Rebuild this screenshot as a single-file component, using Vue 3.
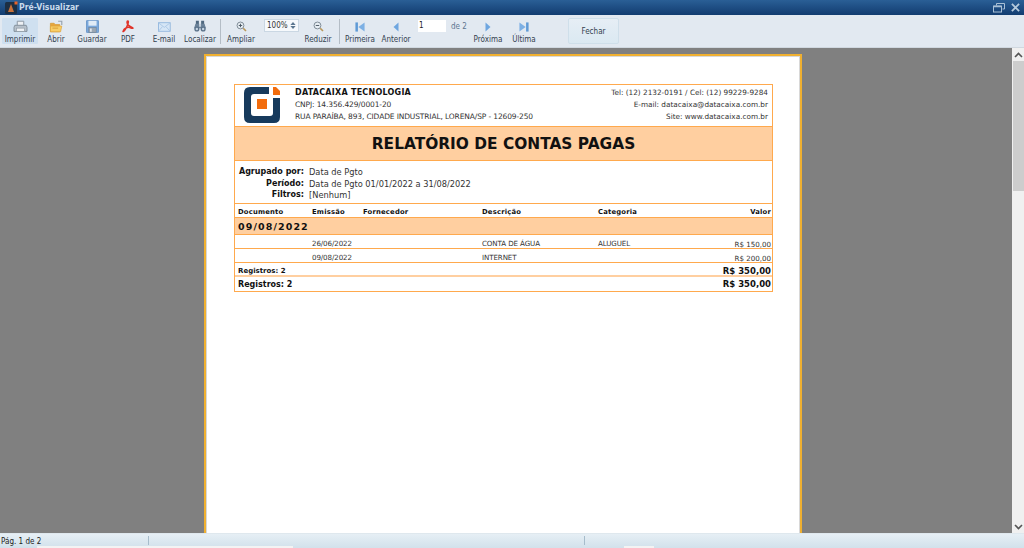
<script setup>
const rows = [
  { date: '26/06/2022', desc: 'CONTA DE ÁGUA', cat: 'ALUGUEL', val: 'R$ 150,00' },
  { date: '09/08/2022', desc: 'INTERNET', cat: '', val: 'R$ 200,00' },
]
</script>

<template>
  <div class="app">
    <header class="titlebar">
      <svg class="appicon" width="14" height="14" viewBox="0 0 14 14">
        <rect x="1" y="1" width="12" height="12" rx="1.5" fill="#1c2f44" />
        <path d="M7 3 L10 11 H4 Z" fill="#c9713a" />
        <rect x="10.5" y="0.5" width="3" height="3" fill="#e8642a" />
      </svg>
      <span class="title">Pré-Visualizar</span>
      <span class="winbtns">
        <svg width="12" height="10" viewBox="0 0 12 10">
          <path d="M3.5 2.5 V0.5 H11.5 V6 H9.5" fill="none" stroke="#a9c0d6" />
          <rect x="0.5" y="3" width="8" height="6" fill="none" stroke="#a9c0d6" />
          <path d="M1 3.5 H8" stroke="#a9c0d6" stroke-width="1.5" />
        </svg>
        <svg width="9" height="9" viewBox="0 0 10 10">
          <path d="M1 1 L9 9 M9 1 L1 9" stroke="#b5cadc" stroke-width="2" />
        </svg>
      </span>
    </header>

    <nav class="toolbar">
      <button class="tool active">
        <svg width="15" height="13" viewBox="0 0 18 16">
          <path d="M5 7 V1.5 H13 V7" fill="#eef1f4" stroke="#8c97a3" stroke-width="1.2" />
          <path d="M2 6.5 H16 L17 9 V14 H1 V9 Z" fill="#b7c1cb" stroke="#7f8b97" stroke-width="1.1" />
          <rect x="4" y="10" width="10" height="4" fill="#eef1f4" stroke="#8c97a3" stroke-width=".8" />
        </svg>
        <span>Imprimir</span>
      </button>
      <button class="tool">
        <svg width="15" height="13" viewBox="0 0 18 16">
          <path d="M1.5 4 H6 L7.5 5.5 H13 V14.5 H1.5 Z" fill="#e7a63d" stroke="#d2962f" stroke-width=".8" />
          <path d="M1.5 7.5 H15.5 L14 14.5 H1.5 Z" fill="#f8cd66" stroke="#dca23a" stroke-width=".8" />
          <path d="M11 1.5 H15.5 V6" fill="none" stroke="#97a3af" stroke-width="1.4" />
          <path d="M4 10 H11" stroke="#d2962f" />
        </svg>
        <span>Abrir</span>
      </button>
      <button class="tool">
        <svg width="13" height="13" viewBox="0 0 16 16">
          <rect x="0.5" y="0.5" width="15" height="15" rx="1" fill="#7aa8dc" stroke="#5f8fc4" />
          <rect x="3" y="1" width="10" height="6" fill="#e0ebf6" />
          <rect x="3.5" y="9.5" width="9" height="6" fill="#9aa6b2" stroke="#6c7b8a" stroke-width=".6" />
          <rect x="5" y="10.5" width="2" height="4" fill="#e4eaf0" />
        </svg>
        <span>Guardar</span>
      </button>
      <button class="tool">
        <svg width="12" height="13" viewBox="0 0 16 16">
          <path d="M7 1 C6 4 8 7 14 9.5 C15.5 10.2 14 11 12 10 C8 8 3 9.5 1.5 14 C0.8 15.5 3 15 5 11 C6.5 8 8.5 3.5 8.5 1.5 C8.5 0.6 7.3 0.5 7 1 Z" fill="none" stroke="#e0342a" stroke-width="2" />
        </svg>
        <span>PDF</span>
      </button>
      <button class="tool">
        <svg class="low" width="13" height="10" viewBox="0 0 18 14">
          <rect x="0.5" y="1" width="16.5" height="12" fill="#d6e6f6" stroke="#8fb4dc" stroke-width="1.2" />
          <path d="M1 1.5 L8.7 7.5 L16.5 1.5 M1 12.5 L6 6.5 M16.5 12.5 L11 6.5" fill="none" stroke="#a7c5e4" stroke-width="1.2" />
        </svg>
        <span>E-mail</span>
      </button>
      <button class="tool">
        <svg width="12" height="12" viewBox="0 0 16 16">
          <rect x="2.5" y="1" width="4" height="6" fill="#4f6880" />
          <rect x="9.5" y="1" width="4" height="6" fill="#4f6880" />
          <path d="M2 5 H7 V9 H9 V5 H14 L16 11 H0 Z" fill="#6b8299" />
          <circle cx="3.8" cy="12" r="3.4" fill="#5a7189" />
          <circle cx="12.2" cy="12" r="3.4" fill="#5a7189" />
          <circle cx="3.8" cy="12" r="1.6" fill="#c3d3e2" />
          <circle cx="12.2" cy="12" r="1.6" fill="#c3d3e2" />
        </svg>
        <span>Localizar</span>
      </button>
      <i class="sep"></i>
      <button class="tool">
        <svg class="nudge" width="11" height="11" viewBox="0 0 16 16">
          <circle cx="6.5" cy="6.5" r="5" fill="#e6edf3" stroke="#7c8894" stroke-width="1.4" />
          <path d="M4 6.5 H9 M6.5 4 V9" stroke="#4a5763" stroke-width="1.4" />
          <path d="M10.5 10.5 L14.5 14.5" stroke="#b9975a" stroke-width="2.4" />
        </svg>
        <span>Ampliar</span>
      </button>
      <div class="zoom">
        <span class="zoomval">100%</span>
        <span class="spin">
          <svg width="6" height="3" viewBox="0 0 7 4"><path d="M3.5 0 L7 4 H0 Z" fill="#5b7690" /></svg>
          <svg width="6" height="3" viewBox="0 0 7 4"><path d="M3.5 4 L7 0 H0 Z" fill="#5b7690" /></svg>
        </span>
      </div>
      <button class="tool">
        <svg class="nudge" width="11" height="11" viewBox="0 0 16 16">
          <circle cx="6.5" cy="6.5" r="5" fill="#e6edf3" stroke="#7c8894" stroke-width="1.4" />
          <path d="M4 6.5 H9" stroke="#4a5763" stroke-width="1.4" />
          <path d="M10.5 10.5 L14.5 14.5" stroke="#b9975a" stroke-width="2.4" />
        </svg>
        <span>Reduzir</span>
      </button>
      <i class="sep wide"></i>
      <button class="tool">
        <svg class="nav" width="10" height="10" viewBox="0 0 12 12">
          <rect x="0.5" y="0.5" width="3" height="11" fill="#5f9ad6" />
          <path d="M11.5 0.5 V11.5 L4 6 Z" fill="#7db0e4" />
        </svg>
        <span>Primeira</span>
      </button>
      <button class="tool">
        <svg class="nav" width="10" height="10" viewBox="0 0 12 12"><path d="M9 0.5 V11.5 L3 6 Z" fill="#6ea6e0" /></svg>
        <span>Anterior</span>
      </button>
      <div class="pager">
        <span class="pageinput">1</span>
        <span class="of">de 2</span>
      </div>
      <button class="tool">
        <svg class="nav" width="10" height="10" viewBox="0 0 12 12"><path d="M3 0.5 V11.5 L9 6 Z" fill="#6ea6e0" /></svg>
        <span>Próxima</span>
      </button>
      <button class="tool">
        <svg class="nav" width="10" height="10" viewBox="0 0 12 12">
          <rect x="8.5" y="0.5" width="3" height="11" fill="#5f9ad6" />
          <path d="M0.5 0.5 V11.5 L8 6 Z" fill="#7db0e4" />
        </svg>
        <span>Última</span>
      </button>
      <button class="close">Fechar</button>
    </nav>

    <main class="body">
      <section class="canvas">
        <article class="page">
          <div class="report">
            <div class="rhead">
              <svg class="logo" width="36" height="36" viewBox="0 0 36 36">
                <path d="M25 0 H6 Q0 0 0 6 V30 Q0 36 6 36 H30 Q36 36 36 30 V11 H29 V26 Q29 29 26 29 H10 Q7 29 7 26 V10 Q7 7 10 7 H25 Z" fill="#173a5c" />
                <rect x="13" y="12" width="10" height="10" fill="#f26c0d" />
                <path d="M29 0 H32 L36 4 V8 H29 Z" fill="#f26c0d" />
              </svg>
              <div class="company">
                <b>DATACAIXA TECNOLOGIA</b>
                <span>CNPJ: 14.356.429/0001-20</span>
                <span>RUA PARAÍBA, 893, CIDADE INDUSTRIAL, LORENA/SP - 12609-250</span>
              </div>
              <div class="contact">
                <span>Tel: (12) 2132-0191 / Cel: (12) 99229-9284</span>
                <span>E-mail: datacaixa@datacaixa.com.br</span>
                <span>Site: www.datacaixa.com.br</span>
              </div>
            </div>
            <h1 class="rtitle">RELATÓRIO DE CONTAS PAGAS</h1>
            <dl class="info">
              <dt>Agrupado por:</dt><dd>Data de Pgto</dd>
              <dt>Período:</dt><dd>Data de Pgto 01/01/2022 a 31/08/2022</dd>
              <dt>Filtros:</dt><dd>[Nenhum]</dd>
            </dl>
            <div class="grid cols">
              <span>Documento</span><span>Emissão</span><span>Fornecedor</span><span>Descrição</span><span>Categoria</span><span class="right">Valor</span>
            </div>
            <div class="group">09/08/2022</div>
            <div v-for="r in rows" :key="r.date" class="grid row">
              <span></span><span>{{ r.date }}</span><span></span><span>{{ r.desc }}</span><span>{{ r.cat }}</span><span class="right val">{{ r.val }}</span>
            </div>
            <div class="sum sub"><span>Registros: 2</span><b>R$ 350,00</b></div>
            <div class="sum total"><span>Registros: 2</span><b>R$ 350,00</b></div>
          </div>
        </article>
      </section>
      <aside class="scroll">
        <span class="arrow">
          <svg width="9" height="6" viewBox="0 0 9 6"><path d="M1 5 L4.5 1.5 L8 5" fill="none" stroke="#555" stroke-width="1.6" /></svg>
        </span>
        <span class="thumb"></span>
        <span class="track"></span>
        <span class="arrow">
          <svg width="9" height="6" viewBox="0 0 9 6"><path d="M1 1 L4.5 4.5 L8 1" fill="none" stroke="#555" stroke-width="1.6" /></svg>
        </span>
      </aside>
    </main>

    <footer class="status">
      <span class="stext">Pág. 1 de 2</span>
      <i class="sbar first"></i>
      <i class="sbar second"></i>
      <i class="strip a"></i>
      <i class="strip b"></i>
    </footer>
  </div>
</template>

<style>
html, body { margin: 0; padding: 0; overflow: hidden; background: #808080; }
</style>

<style scoped>
.app {
  width: 1024px;
  height: 548px;
  display: flex;
  flex-direction: column;
  overflow: hidden;
  font-family: "DejaVu Sans Condensed", "DejaVu Sans", sans-serif;
  color: #2c3a47;
}
.titlebar {
  height: 15px;
  flex: none;
  display: flex;
  align-items: center;
  padding: 0 3px 0 4px;
  background: linear-gradient(#2a5f96, #123c70);
  box-sizing: border-box;
}
.appicon { flex: none; }
.title {
  margin-left: 1px;
  font: 700 8.6px/15px "DejaVu Sans Condensed", "DejaVu Sans", sans-serif;
  color: #c9dbec;
}
.winbtns {
  margin-left: auto;
  display: flex;
  align-items: center;
  gap: 6px;
  padding-right: 1px;
}
.toolbar {
  height: 33px;
  flex: none;
  box-sizing: border-box;
  padding: 3px 0 0 2px;
  display: flex;
  align-items: flex-start;
  background: #e2e9f1;
  border-bottom: 1px solid #d0d8e0;
}
.tool {
  width: 36px;
  height: 26px;
  flex: none;
  margin: 0;
  padding: 2px 0 0;
  border: 0;
  background: none;
  display: flex;
  flex-direction: column;
  align-items: center;
  justify-content: flex-start;
  position: relative;
  font: inherit;
  color: inherit;
}
.tool svg { flex: none; }
.tool svg.low { margin-top: 2px; }
.tool svg.nudge { margin-top: 1px; }
.tool svg.nav { margin-top: 2px; }
.tool span {
  position: absolute;
  top: 16px;
  left: -4px;
  right: -4px;
  text-align: center;
  font: 400 8px/11px "DejaVu Sans Condensed", "DejaVu Sans", sans-serif;
  color: #33414f;
  white-space: nowrap;
}
.tool.active { background: #cfe0f0; border-radius: 1px; }
.sep {
  width: 1px;
  height: 25px;
  flex: none;
  margin: 1px 2px 0 2px;
  background: #b4bdc6;
}
.sep.wide { margin-left: 3px; }
.zoom {
  width: 35px;
  height: 13px;
  flex: none;
  margin: 1px 1px 0 5px;
  display: flex;
  align-items: center;
  justify-content: space-between;
  box-sizing: border-box;
  background: #f6f9fc;
  border: 1px solid #cad7e3;
  padding: 0 2px;
  font: 400 8px/11px "DejaVu Sans Condensed", "DejaVu Sans", sans-serif;
  color: #333;
}
.spin { display: flex; flex-direction: column; gap: 1px; }
.spin svg { display: block; }
.pager {
  width: 56px;
  height: 26px;
  flex: none;
  display: flex;
  align-items: flex-start;
  padding: 2px 0 0 4px;
  box-sizing: border-box;
}
.pageinput {
  width: 28px;
  height: 12px;
  background: #fff;
  padding-left: 1px;
  box-sizing: border-box;
  font: 400 8px/12px "DejaVu Sans Condensed", "DejaVu Sans", sans-serif;
  color: #222;
}
.of {
  margin: 1px 0 0 5px;
  font: 400 8px/11px "DejaVu Sans Condensed", "DejaVu Sans", sans-serif;
  color: #5d7690;
}
.close {
  width: 51px;
  height: 26px;
  flex: none;
  margin: 0 0 0 26px;
  padding: 1px 0 0;
  border: 1px solid #cfdfea;
  border-radius: 2px;
  background: linear-gradient(#e6eef5, #dbe9f2);
  font: 400 8px/23px "DejaVu Sans Condensed", "DejaVu Sans", sans-serif;
  color: #33414f;
}
.body {
  flex: 1;
  min-height: 0;
  display: flex;
  background: #808080;
}
.canvas {
  flex: 1;
  min-width: 0;
  overflow: hidden;
  padding: 6px 0 0 204px;
  box-sizing: border-box;
}
.page {
  width: 598px;
  height: 600px;
  box-sizing: border-box;
  background: #fff;
  border: 2px solid #f0b030;
  box-shadow: inset 0 0 0 1px #d8d8d8;
  padding: 28px 28px 0 28px;
}
.report {
  width: 539px;
  font: 400 8px/13px "DejaVu Sans", sans-serif;
  color: #222;
  border: 1px solid #ffa94d;
  border-bottom: 0;
  box-sizing: border-box;
}
.rhead {
  height: 41px;
  box-sizing: border-box;
  display: flex;
  align-items: flex-start;
  padding: 2px 4px 0 9px;
}
.logo { flex: none; margin-right: 15px; margin-top: 0; }
.company, .contact {
  display: flex;
  flex-direction: column;
  line-height: 12px;
  letter-spacing: -0.13px;
  font-size: 7.5px;
  color: #333;
}
.company b {
  font-size: 8px;
  letter-spacing: 0.25px;
  color: #111;
}
.contact {
  margin-left: auto;
  text-align: right;
  letter-spacing: 0;
  font-size: 7.3px;
}
.rtitle {
  margin: 0;
  height: 35px;
  box-sizing: border-box;
  background: #ffcfa0;
  border-top: 1px solid #ffa94d;
  border-bottom: 1px solid #ffa94d;
  padding-top: 1px;
  text-align: center;
  font: 700 15.4px/32px "DejaVu Sans", sans-serif;
  color: #111;
}
.info {
  margin: 0;
  height: 42px;
  box-sizing: border-box;
  padding: 5px 0 0 0;
  display: grid;
  grid-template-columns: 69px 1fr;
  column-gap: 5px;
  grid-auto-rows: 11.7px;
  font-size: 8.25px;
  line-height: 12px;
}
.info dt {
  font-weight: 700;
  font-size: 8px;
  letter-spacing: 0;
  text-align: right;
  white-space: nowrap;
  color: #111;
}
.info dd { margin: 0; color: #333; }
.grid {
  display: grid;
  grid-template-columns: 74px 51px 119px 116px 100px 1fr;
  padding: 0 1px 0 3px;
}
.cols {
  height: 14px;
  box-sizing: border-box;
  border-top: 1px solid #ffa94d;
  padding-top: 2px;
  font-size: 6.8px;
  font-weight: 700;
  letter-spacing: 0.2px;
  color: #111;
  line-height: 12px;
}
.right { text-align: right; }
.group {
  height: 18px;
  box-sizing: border-box;
  background: #ffcfa0;
  border-top: 1px solid #ffa94d;
  border-bottom: 1px solid #ffa94d;
  padding: 2px 0 0 3px;
  font: 700 9.5px/14px "DejaVu Sans", sans-serif;
  letter-spacing: 1.1px;
  color: #111;
}
.row {
  height: 14px;
  box-sizing: border-box;
  border-bottom: 1px solid #ffa94d;
  padding-top: 4px;
  font-size: 7.1px;
  letter-spacing: -0.1px;
  line-height: 9px;
  color: #333;
}
.val { padding-top: 1px; letter-spacing: 0; }
.sum {
  height: 14px;
  box-sizing: border-box;
  display: flex;
  justify-content: space-between;
  align-items: center;
  padding: 0 1px 0 3px;
  color: #111;
}
.sum span { font-weight: 700; }
.sum b { font-size: 8.5px; }
.sub { border-bottom: 2px solid #ffcfa0; font-size: 7px; padding-top: 4px; }
.total { border-bottom: 1px solid #ffa94d; height: 15px; font-size: 8px; }
.scroll {
  width: 12px;
  flex: none;
  background: #f0f0f0;
  display: flex;
  flex-direction: column;
  align-items: stretch;
  box-sizing: border-box;
}
.arrow {
  height: 13px;
  flex: none;
  display: flex;
  align-items: center;
  justify-content: center;
}
.thumb {
  height: 130px;
  flex: none;
  margin-left: 1px;
  background: #cdcdcd;
}
.track { flex: 1; }
.status {
  height: 15px;
  flex: none;
  position: relative;
  background: linear-gradient(#e6eff5, #d2e1eb);
  border-top: 1px solid #dfe8ee;
  box-sizing: border-box;
}
.stext {
  position: absolute;
  left: 1px;
  top: 1px;
  font: 400 8px/13px "DejaVu Sans Condensed", "DejaVu Sans", sans-serif;
  color: #222;
}
.sbar {
  position: absolute;
  top: 2px;
  width: 1px;
  height: 9px;
  background: #a6bccb;
}
.first { left: 148px; }
.second { left: 584px; }
.strip {
  position: absolute;
  bottom: 0;
  height: 2px;
  background: #f3f3f3;
}
.a { left: 37px; width: 256px; }
.b { left: 624px; width: 30px; }
</style>
